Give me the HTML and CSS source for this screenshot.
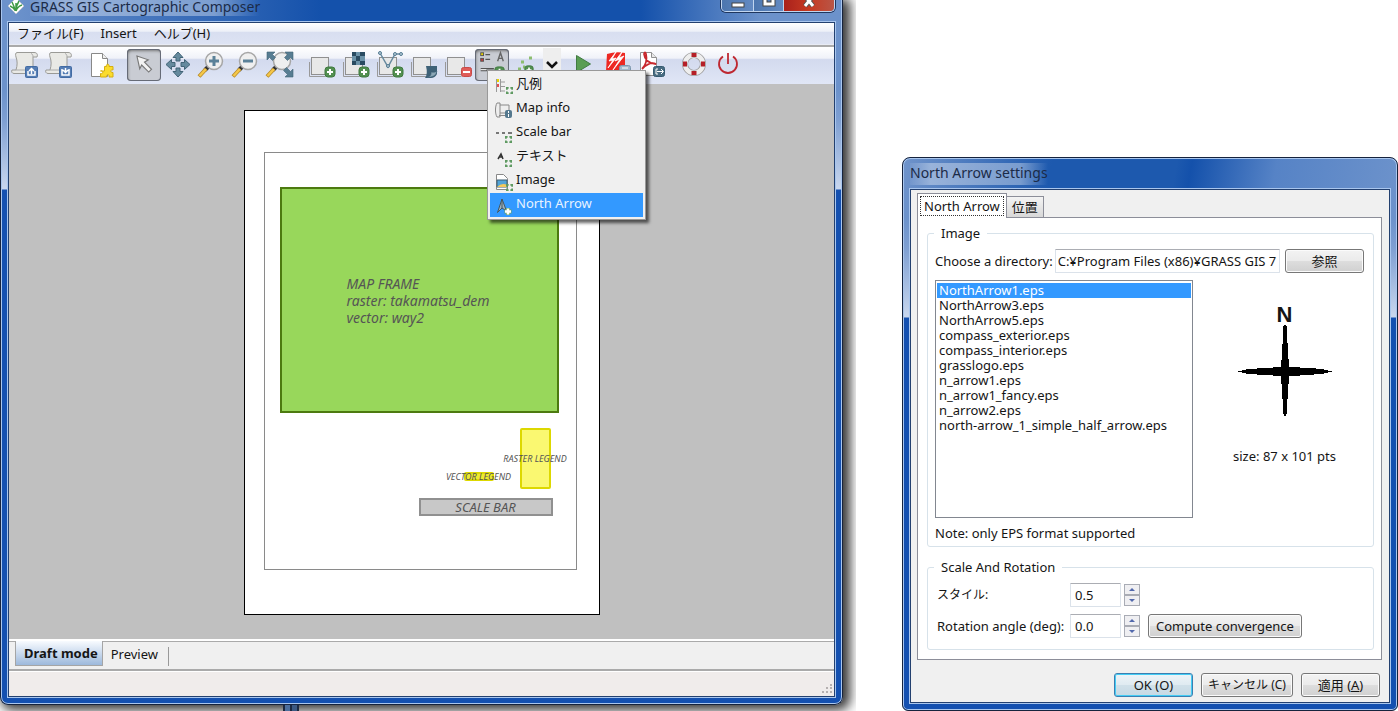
FILE: index.html
```html
<!DOCTYPE html>
<html lang="ja">
<head>
<meta charset="utf-8">
<title>GRASS GIS Cartographic Composer</title>
<link rel="stylesheet" href="styles.css">
</head>
<body>
<svg class="defs" aria-hidden="true">
  <defs>
    <symbol id="plus" viewBox="0 0 12 12"><rect x="1" y="1" width="10" height="10" rx="3" fill="#528f50" stroke="#3f7a3f"/><path d="M6 3v6M3 6h6" stroke="#fff" stroke-width="2"/></symbol>
    <symbol id="frame" viewBox="0 0 34 34"><path d="M4.500 14v14.500h16" fill="none" stroke="#999"/><rect x="6.500" y="9.500" width="17" height="17" fill="#e8e8e8" stroke="#909090"/></symbol>
    <symbol id="scroll" viewBox="0 0 34 34"><path d="M8 4.500h17c3 0 4 2 3 4.500h-4v12c0 3-1 4.500-4 4.500H5c-2 0-3-2-2-3.500h4c1.500-5 1.500-9 0-13-.5-2-1-4 1-4.500z" fill="#e9e9e5" stroke="#9a9a96"/><path d="M24 9c0-2-.5-3-2-3.500M7 22h10c2 0 2 3 4 3" fill="none" stroke="#aaa"/></symbol>
    <symbol id="dots" viewBox="0 0 8 8"><path d="M0 1h3M5 1h3M0 7h3M5 7h3M1 2v1M7 2v1M1 5v1M7 5v1" stroke="#5d9960" stroke-width="2"/></symbol>
    <symbol id="lens" viewBox="0 0 34 34"><path d="M13 19L10 22" stroke="#333" stroke-width="4"/><path d="M11 21L4 28.500" stroke="#b58a28" stroke-width="4"/><path d="M11 21L4.500 28" stroke="#f5c748" stroke-width="2.500"/><circle cx="19" cy="13" r="8.500" fill="#efefef" stroke="#a6a6a6" stroke-width="1.500"/></symbol>
  </defs>
</svg>
<main class="desktop">
  <section class="stage">
    <span class="strip"></span>
    <div class="window composer">
      <header class="titlebar">
        <svg width="16" height="16" viewBox="0 0 16 16"><path d="M8-2l8 8-8 8-8-8z" fill="#fff" stroke="#bbb" stroke-width=".5"/><path d="M7.500 11C6 8 5 7 2 6M7.500 11C6 6 5 4 4 2M8 11c0-4 1-7 3-10M8 11c1-3 3-5 6-6M8 11V3" stroke="#3f9a45" stroke-width="1.500" fill="none"/></svg>
        <h1>GRASS GIS Cartographic Composer</h1>
        <div class="winbuttons">
          <button class="min" aria-label="Minimize"><svg width="14" height="12"><rect x="1" y="3" width="12" height="4" fill="#fff" stroke="#444"/></svg></button>
          <button class="max" aria-label="Maximize"><svg width="14" height="12"><path d="M3-3h8v7H3z" fill="none" stroke="#444" stroke-width="5"/><path d="M3-3h8v7H3z" fill="none" stroke="#fff" stroke-width="3"/></svg></button>
          <button class="close" aria-label="Close"><svg width="14" height="12"><path d="M3-4l8 10M11-4L3 6" stroke="#555" stroke-width="5"/><path d="M3-4l8 10M11-4L3 6" stroke="#fff" stroke-width="3"/></svg></button>
        </div>
      </header>
      <div class="client">
        <nav class="menubar"><button>ファイル(F)</button><button>Insert</button><button>ヘルプ(H)</button></nav>
        <div class="toolbar">
          <button aria-label="Load"><svg viewBox="0 0 34 34"><use href="#scroll"/><rect x="16.500" y="18.500" width="12" height="11" rx="1" fill="#557db4" stroke="#426ba3"/><path d="M19 23v4h7v-4M22.500 26v-5M20 23l2.500-2.500L25 23" stroke="#fff" stroke-width="1.500" fill="none"/></svg></button>
          <button aria-label="Save"><svg viewBox="0 0 34 34"><use href="#scroll"/><rect x="16.500" y="18.500" width="12" height="11" rx="1" fill="#557db4" stroke="#426ba3"/><path d="M19 21v6h7v-6M22.500 20v4M20 22l2.500 2.500L25 22" stroke="#fff" stroke-width="1.500" fill="none"/></svg></button>
          <i class="sep"></i>
          <button aria-label="Page setup"><svg viewBox="0 0 34 34"><path d="M6.500 5.500h11l5 5v18h-16z" fill="#fff" stroke="#888"/><path d="M17.500 5.500v5h5" fill="#eee" stroke="#888"/><path d="M19.500 18.500h2c-1-3 3.500-3 2.500 0h4v3.500c-3-1-3 3 0 2.500v4.500h-4c1-3-3-3-2.500 0h-6v-3.500c3 1 3-3.500 0-2.500h4z" fill="#fbdc2d" stroke="#d5ae10"/></svg></button>
          <i class="sep"></i>
          <button class="pressed" aria-label="Pointer"><svg viewBox="0 0 34 34"><path d="M9.500 7.500l12 4-4 2.500 7.500 7.500-3 3-7.500-7.500-2 4z" fill="#f3f3f3" stroke="#777" stroke-width="1.200"/></svg></button>
          <button aria-label="Pan"><svg viewBox="0 0 34 34"><path d="M17 4l5 5.500h-3v3.500h-4V9.500h-3zM17 29l5-5.500h-3V20h-4v3.500h-3zM5 16.500l5.500-5v3H14v4h-3.500v3zM29 16.500l-5.500-5v3H20v4h3.500v3z" fill="#658a9e" stroke="#426477"/></svg></button>
          <button aria-label="Zoom in"><svg viewBox="0 0 34 34"><use href="#lens"/><path d="M19 8v10M14 13h10" stroke="#5b8198" stroke-width="3"/></svg></button>
          <button aria-label="Zoom out"><svg viewBox="0 0 34 34"><use href="#lens"/><path d="M14 13h10" stroke="#5b8198" stroke-width="3"/></svg></button>
          <button aria-label="Zoom all"><svg viewBox="0 0 34 34"><use href="#lens"/><path d="M4 4h8L9.500 6.500l3 3-3 3-3-3L4 12zM30 4h-8l2.500 2.500-3 3 3 3 3-3L30 12zM30 29h-8l2.500-2.500-4-4 3-3 4 4L30 21z" fill="#577d92" stroke="#426477" stroke-width=".6"/></svg></button>
          <i class="sep"></i>
          <button aria-label="Map frame"><svg viewBox="0 0 34 34"><use href="#frame"/><use href="#plus" x="19" y="18" width="12" height="12"/></svg></button>
          <button aria-label="Raster map"><svg viewBox="0 0 34 34"><use href="#frame"/><path d="M13 4h13v13H13z" fill="#6c93a9"/><path d="M13 4h4v4h-4zM21 4h5v4h-5zM17 8h4v5h-4zM13 13h4v4h-4zM21 13h5v4h-5z" fill="#294b61"/><use href="#plus" x="19" y="18" width="12" height="12"/></svg></button>
          <button aria-label="Vector map"><svg viewBox="0 0 34 34"><use href="#frame"/><path d="M7 5l8 14 7-13h6" fill="none" stroke="#66899e" stroke-width="1.500"/><g fill="#b6cbd7" stroke="#537a91"><circle cx="7" cy="5" r="1.500"/><circle cx="15" cy="18" r="1.500"/><circle cx="22" cy="6" r="1.500"/><circle cx="28" cy="6" r="1.500"/></g><use href="#plus" x="19" y="18" width="12" height="12"/></svg></button>
          <button aria-label="Labels"><svg viewBox="0 0 34 34"><use href="#frame"/><path d="M19 18h11v8q-2 4-6 4h-6q3-4 1-12z" fill="#3e6177"/><path d="M19 29q6 0 5-5 4 1 6-1-1 7-11 6z" fill="#8ba7b6" stroke="#375a70" stroke-width=".5"/></svg></button>
          <button aria-label="Delete"><svg viewBox="0 0 34 34"><use href="#frame"/><rect x="20.500" y="19.500" width="10" height="9" rx="2" fill="#df5c59" stroke="#c84a48"/><path d="M22 24h7" stroke="#fff" stroke-width="2"/></svg></button>
          <button class="pressed" aria-label="Add overlays"><svg viewBox="0 0 34 34"><rect x="5" y="4" width="3" height="3" fill="#e9d300" stroke="#555"/><rect x="5" y="10" width="3" height="3" fill="#c53a3a" stroke="#555"/><path d="M10 6h5M10 11h5M5 21h14M5 23h14" stroke="#555" stroke-width="1.500"/><path d="M5 22h6" stroke="#fff"/><path d="M23 13l3-9 3 9M24 10h4" stroke="#666" stroke-width="1.500" fill="none"/><use href="#plus" x="19" y="18" width="12" height="12"/></svg></button>
          <button aria-label="Add shapes"><svg viewBox="0 0 34 34"><path d="M12 14h3M20 10h3M9 21h3M14 19h2" stroke="#8cbd6f" stroke-width="3"/><use href="#plus" x="15" y="17" width="10" height="10"/></svg></button>
          <button class="drop" aria-label="More shapes"><svg viewBox="0 0 18 34"><path d="M4 14l5 5 5-5" fill="none" stroke="#111" stroke-width="2.500"/></svg></button>
          <button aria-label="Run"><svg viewBox="0 0 34 34"><path d="M9.500 7.500l14 8.500-14 8.500z" fill="#599d53" stroke="#407b42"/></svg></button>
          <button aria-label="PostScript"><svg viewBox="0 0 34 34"><path d="M6 6q9-3 18-1v18H5z" fill="#ed2823"/><path d="M15 4l-7 9 4-1-5 8 8-10-4 1zM21 4l-7 9 5-2-7 11 11-14-5 2z" fill="#fff" stroke="#fff" stroke-width=".8"/><rect x="18.500" y="17.500" width="11" height="11" rx="2" fill="#a4b8cd" stroke="#7d98ae"/><path d="M21 20h6M21 23h6" stroke="#fff"/></svg></button>
          <button aria-label="PDF"><svg viewBox="0 0 34 34"><path d="M5.500 4.500h11l5 5v18h-16z" fill="#fff" stroke="#909090"/><path d="M16.500 4.500v5h5" fill="#e8e8e8" stroke="#909090"/><path d="M7 21q6-6 4-15-1-3-2 0 1 9 12 10-6-3-14 5z" fill="none" stroke="#c8282d" stroke-width="1.800"/><rect x="18.500" y="18.500" width="11" height="10" rx="2" fill="#496c81" stroke="#345a70"/><path d="M23 21h-2v5h2M22 23.500h6M26 21l2.500 2.500L26 26" stroke="#fff" fill="none"/></svg></button>
          <i class="sep"></i>
          <button aria-label="Help"><svg viewBox="0 0 34 34"><circle cx="17" cy="16" r="9" fill="none" stroke="#999" stroke-width="6"/><circle cx="17" cy="16" r="9" fill="none" stroke="#eee" stroke-width="4.500"/><path d="M14.500 7h5M14.500 25h5M8 13.500v5M26 13.500v5" stroke="#b52027" stroke-width="4"/></svg></button>
          <button aria-label="Quit"><svg viewBox="0 0 34 34"><path d="M12 8.500a9 9 0 1 0 10 0M17 5v11" fill="none" stroke="#be2831" stroke-width="1.800"/></svg></button>
          <ul class="menu" role="menu">
            <li role="menuitem"><svg viewBox="0 0 18 20"><path d="M2 2h2v3H2z" fill="#e8d400"/><path d="M2 7h2v3H2z" fill="#e05050"/><path d="M1.500 2v13M5.500 2v13M6 5h4M6 9.500h4M6 14h4" stroke="#999"/><use href="#dots" x="11" y="10" width="7" height="7"/></svg>凡例</li>
            <li role="menuitem"><svg viewBox="0 0 18 20"><path d="M2 2h3v14H2c-2-3-2-11 0-14zM5 4h9v8H5M4 14.500h7" fill="#eee" stroke="#888"/><rect x="10" y="9" width="7" height="8" rx="2" fill="#54788e"/><path d="M13.500 10v2M13.500 13v3" stroke="#fff"/></svg>Map info</li>
            <li role="menuitem"><svg viewBox="0 0 18 20"><path d="M1 8h3M7 8h3M13 8h4" stroke="#777" stroke-width="2"/><use href="#dots" x="10" y="11" width="7" height="7"/></svg>Scale bar</li>
            <li role="menuitem"><svg viewBox="0 0 18 20"><path d="M3 10l3-5 2 5M4 8h4" stroke="#333" stroke-width="1.500" fill="none"/><use href="#dots" x="10" y="11" width="7" height="7"/></svg>テキスト</li>
            <li role="menuitem"><svg viewBox="0 0 18 20"><path d="M1.500 1.500h7l4 4v11h-11z" fill="#fff" stroke="#888"/><path d="M2 7h10v7H2z" fill="#52a4d8" stroke="#3d5d70"/><path d="M2 14q5-5 10-2v2z" fill="#f2c85c"/><use href="#dots" x="11" y="11" width="7" height="7"/></svg>Image</li>
            <li role="menuitem" class="selected"><svg viewBox="0 0 18 20"><path d="M2.500 15.500L7 2l4.500 12L7 11z" fill="#9bb2c0" stroke="#44565f"/><path d="M7 2v9" stroke="#44565f"/><path d="M13 11v7M9.500 14.500h7" stroke="#6ca568" stroke-width="4"/><path d="M13 11.500v6M10 14.500h6" stroke="#fff" stroke-width="2.500"/></svg>North Arrow</li>
          </ul>
        </div>
        <div class="canvas">
          <div class="page">
            <div class="margins"></div>
            <div class="item map"><p>MAP FRAME<br>raster: takamatsu_dem<br>vector: way2</p></div>
            <div class="item raster"><span>RASTER LEGEND</span></div>
            <div class="item vector"><span>VECTOR LEGEND</span></div>
            <div class="item scalebar">SCALE BAR</div>
          </div>
        </div>
        <div class="modes"><button class="active">Draft mode</button><button>Preview</button></div>
        <footer class="status"><svg width="10" height="10"><path d="M8 1h2M8 4h2M8 8h2M4 4h2M4 8h2M0 8h2" stroke="#b5b0b0" stroke-width="2"/></svg></footer>
      </div>
    </div>
  </section>

  <section class="window dialog" role="dialog" aria-labelledby="dialog-title">
    <header class="titlebar"><h2 id="dialog-title">North Arrow settings</h2></header>
    <div class="client">
      <div class="tabs" role="tablist"><button role="tab" class="active"><span>North Arrow</span></button><button role="tab">位置</button></div>
      <form class="panel">
        <fieldset class="image">
          <legend>Image</legend>
          <div class="row"><label for="dir">Choose a directory:</label><input id="dir" type="text" value="C:¥Program Files (x86)¥GRASS GIS 7"><button type="button" class="btn">参照</button></div>
          <div class="choose">
            <ul class="files" role="listbox" aria-label="Image">
              <li class="selected" role="option">NorthArrow1.eps</li><li role="option">NorthArrow3.eps</li><li role="option">NorthArrow5.eps</li><li role="option">compass_exterior.eps</li><li role="option">compass_interior.eps</li><li role="option">grasslogo.eps</li><li role="option">n_arrow1.eps</li><li role="option">n_arrow1_fancy.eps</li><li role="option">n_arrow2.eps</li><li role="option">north-arrow_1_simple_half_arrow.eps</li>
            </ul>
            <div class="preview">
              <strong>N</strong>
              <svg width="94" height="92" viewBox="0 0 94 92" shape-rendering="crispEdges"><path d="M46 0h2l1 2v16l1 1v15l1 1v7h11v1h16v1h8v1l8 1v1l-8 1-1 1H76v1H62v1H51v8h-1v15h-1v15h-1l-1 4-1-4h-1V74h-1V59h-1v-8H35v-1H19v-1H8v-1l-8-1v-1l8-1v-1h11v-1h16v-1h8v-7l1-1V19l1-1V2z"/></svg>
              <span>size: 87 x 101 pts</span>
            </div>
          </div>
          <p>Note: only EPS format supported</p>
        </fieldset>
        <fieldset class="scale">
          <legend>Scale And Rotation</legend>
          <div class="grid">
            <label for="scale" class="kana">スタイル:</label>
            <div class="spin"><input id="scale" type="text" value="0.5"><span class="arrows"><button type="button" class="up" aria-label="Increase scale"></button><button type="button" class="down" aria-label="Decrease scale"></button></span></div>
            <label for="angle">Rotation angle (deg):</label>
            <div class="spin"><input id="angle" type="text" value="0.0"><span class="arrows"><button type="button" class="up" aria-label="Increase angle"></button><button type="button" class="down" aria-label="Decrease angle"></button></span><button type="button" class="btn">Compute convergence</button></div>
          </div>
        </fieldset>
      </form>
      <footer class="actions"><button class="btn default">OK (O)</button><button class="btn cancel">キャンセル (C)</button><button class="btn">適用 (<u>A</u>)</button></footer>
    </div>
  </section>
</main>
</body>
</html>
```
FILE: styles.css
```css
* { box-sizing: border-box; }
body { margin: 0; background: #fff; color: #151515; font: 13px/16px "Noto Sans", "Noto Sans CJK JP", sans-serif; }
button, input { font: inherit; color: inherit; margin: 0; }
button { padding: 0; border: 0; background: none; }
ul { list-style: none; margin: 0; padding: 0; }
h1, h2, p { margin: 0; font-size: inherit; font-weight: normal; }
.defs { position: absolute; width: 0; height: 0; }

.desktop { display: grid; grid-template-columns: 856fr 496fr; column-gap: 46px; min-height: 100vh; }
.stage { position: relative; display: flex; overflow: hidden; padding: 0 13px 6px 0; }
.strip { position: absolute; left: 283px; bottom: 0; width: 16px; height: 6px; border: solid #1d2a42; border-width: 0 2px; background: linear-gradient(90deg, #4c6e9d 5px, #1d2a42 5px 7px, #3c5983 7px); z-index: 1; }

/* glass window frame */
.window { display: flex; flex-direction: column; flex: 1; min-width: 0; padding: 0 7px 7px; border: 1px solid #16233d; }
.composer { border-top: 0; border-radius: 0 0 8px 8px; background: linear-gradient(90deg, transparent 12px, #1451ab 320px 640px, transparent 760px) top / 100% 22px no-repeat, linear-gradient(#6c92cb 0 90px, #7e9fd2 120px, #c9d7ee 189px, #1450b0 190px); box-shadow: inset 0 -1px #a9c6ee, inset 1px 0 #a9c6ee, inset -1px 0 #a9c6ee, 4px 2px 12px 3px #000c; }
.dialog { margin-top: 157px; border-radius: 8px 8px 6px 6px; background: linear-gradient(100deg, #7094cb, #1d59ae 30% 55%, #1451ab 58%, #5683c6 75%, #6c92cb) top / 100% 32px no-repeat, linear-gradient(#6c92cb 0 60px, #7e9fd2 90px, #c9d7ee 159px, #1450b0 160px); box-shadow: inset 0 0 0 1px #a9c6ee; }
.titlebar { display: flex; color: #1b2b48; }
.titlebar h1, .titlebar h2 { font-size: 14px; background: linear-gradient(90deg, #ffffff10, #ffffff5c 15% 80%, transparent); }
.composer .titlebar { height: 22px; gap: 6px; }
.composer h1 { height: 16px; line-height: 14px; }
.winbuttons { display: flex; margin-left: auto; height: 12px; border: 1px solid #c1d5ef; border-top: 0; border-radius: 0 0 5px 5px; overflow: hidden; box-shadow: 0 0 0 1px #1f365e; }
.winbuttons button { display: flex; justify-content: center; background: linear-gradient(90deg, #4c76af, #638ac2); border-right: 1px solid #c1d5ef; }
.min { width: 32px; } .max { width: 30px; }
.winbuttons .close { width: 50px; border: 0; background: linear-gradient(90deg, #a9211c, #c63a22, #b95647); }
.client { display: flex; flex-direction: column; flex: 1; border: 1px solid #23406f; box-shadow: 0 0 0 1px #a9c6ee; background: #f0f0f0; }

.menubar { display: flex; gap: 17px; height: 22px; padding: 0 8px 2px; background: linear-gradient(#fff, #edf0f8 40%, #d8def0 42%, #dde3f3); border-bottom: 1px solid #e8ebf4; }
.toolbar { position: relative; display: flex; align-items: center; height: 39px; padding: 1px 0 2px; border-top: 2px solid #aaa; background: linear-gradient(#fff, #f0f2f9 30%, #d3daee 34%, #e0e6f6); }
.toolbar button { flex: 0 0 34px; height: 34px; }
.toolbar button svg { display: block; width: 100%; height: 34px; }
.toolbar .pressed { height: 32px; border-radius: 4px; background: #c9ccd3; box-shadow: inset 0 0 0 1px #666b77, inset 1px 2px 3px #777; }
.toolbar .pressed svg { height: 32px; }
.toolbar .drop { flex-basis: 18px; margin-right: 6px; background: #eee; }
.sep { flex: 0 0 8px; }
.menu { position: absolute; left: 478px; top: 23px; width: 159px; padding: 2px; border: 1px solid #999; background: #f0f0f0; box-shadow: 3px 3px 3px #0009; z-index: 2; }
.menu li { display: flex; align-items: center; height: 24px; gap: 3px; padding: 0 0 4px 5px; }
.menu svg { width: 18px; height: 20px; margin-top: 8px; }
.menu .selected { background: #3399ff; color: #e8f3ff; }

.canvas { flex: 1; display: flex; align-items: flex-start; justify-content: center; padding: 26px 0 18px; background: #c0c0c0; }
.page { position: relative; width: 356px; height: 505px; border: 1px solid #000; background: #fff; }
.page > * { position: absolute; }
.margins { left: 19px; top: 41px; width: 313px; height: 418px; border: 1px solid #8a8a8a; }
.item { display: flex; justify-content: center; align-items: center; font-style: italic; color: #555; }
.map { left: 35px; top: 76px; width: 279px; height: 226px; border: 2px solid #4c7a0f; background: #98d75b; justify-content: flex-start; padding-left: 65px; font-size: 14px; line-height: 17px; }
.raster { left: 275px; top: 317px; width: 31px; height: 61px; border: 2px solid #ddd800; border-radius: 2px; background: #faf871; }
.vector { left: 219px; top: 361px; width: 30px; height: 9px; border: 2px solid #ddd800; border-radius: 2px; background: #eeea30; }
.raster span, .vector span { flex: none; font-size: 9px; }
.scalebar { left: 174px; top: 387px; width: 134px; height: 18px; border: 2px solid #909090; background: #c8c8c8; font-size: 13px; }

.modes { display: flex; align-items: flex-start; height: 32px; padding-left: 6px; border-top: 2px solid #fff; border-bottom: 2px solid #aaa; box-shadow: inset 0 1px #aaa; }
.modes button { height: 25px; padding: 0 11px 0 8px; background: linear-gradient(#999, #999) right bottom / 1px 19px no-repeat; }
.modes .active { padding: 0 4px 0 8px; font-weight: bold; background: linear-gradient(#f8fbff, #9db9dc); border: 1px solid #a5a5a5; border-top: 0; }
.status { display: flex; align-items: flex-end; justify-content: flex-end; height: 25px; padding: 2px; background: #f0eceb; border-top: 1px solid #fff; }

.dialog .titlebar { height: 31px; align-items: center; }
.dialog .titlebar h2 { padding: 2px 0 4px; }
.dialog .client { padding: 4px 7px 5px 6px; }
.tabs { display: flex; align-items: flex-end; height: 23px; }
.tabs button { height: 21px; padding: 0 5px; border: 1px solid #8c8e99; border-left: 0; border-bottom: 0; background: linear-gradient(#f4f4f4, #d8d8d8); }
.tabs .active { height: 25px; margin-bottom: -1px; padding: 2px; border-left: 1px solid #8c8e99; background: #fff; z-index: 1; }
.tabs .active span { display: block; padding: 1px 3px; border: 1px dotted #333; }
.panel { display: flex; flex-direction: column; flex: 1; padding: 7px 7px 9px 9px; border: 1px solid #8c8e99; background: #fff; }
fieldset { min-width: 0; margin: 0; padding: 0 9px 0 7px; border: 1px solid #d7e2ea; border-radius: 3px; }
legend { margin-left: -1px; padding: 0 7px; }
.image { height: 322px; margin-bottom: 12px; }
.row { display: flex; align-items: center; margin-top: 8px; }
.row label { flex: none; margin-right: 2px; }
input { height: 24px; min-width: 0; padding: 0 4px; border: 1px solid #dbe2ea; border-top-color: #abadb3; border-radius: 1px; background: #fff; }
.row input { flex: 1; margin-right: 5px; padding: 0 2px; }
.btn { height: 24px; border: 1px solid #777; border-radius: 3px; background: linear-gradient(#f3f3f3, #ebebeb 48%, #dddddd 52%, #d0d0d0); box-shadow: inset 0 0 0 1px #fbfbfb; }
.row .btn { width: 79px; }
.choose { display: flex; margin-top: 7px; height: 238px; }
.files { width: 258px; padding: 2px 1px; border: 1px solid #828790; line-height: 15px; }
.files li { padding-left: 2px; white-space: nowrap; }
.files .selected { background: #3399ff; color: #fff; }
.preview { flex: 1; display: flex; flex-direction: column; align-items: center; padding: 25px 0 0 12px; }
.preview strong { font: bold 22px/20px "Liberation Sans", sans-serif; }
.preview span { margin-top: 31px; }
.image p { margin-top: 7px; }
.scale { flex: 1; padding-left: 9px; }
.scale legend { margin-left: -3px; }
.grid { display: grid; grid-template-columns: 133px 1fr; row-gap: 7px; align-items: center; margin-top: 8px; }
.kana { font-size: 12px; }
.spin { display: flex; }
.spin input { width: 51px; }
.arrows { display: flex; flex-direction: column; width: 16px; margin: 1px 8px 1px 3px; }
.arrows button { height: 11px; display: flex; align-items: center; justify-content: center; border: 1px solid #a9acb5; background: #efeff2; }
.arrows button::after { content: ""; border: 3px solid transparent; }
.arrows .up::after { margin-top: -3px; border-bottom-color: #5269ac; }
.arrows .down::after { margin-top: 3px; border-top-color: #5269ac; }
.spin .btn { padding: 0 7px; }
.actions { display: flex; justify-content: flex-end; gap: 8px; margin-top: 13px; padding-right: 2px; }
.actions .btn { width: 79px; }
.actions .cancel { width: 92px; font-size: 12px; }
.actions .default { border-color: #3c7fb1; background: linear-gradient(#eef4f8, #e0ebf1 48%, #d0e0e9 52%, #c6d9e4); box-shadow: inset 0 0 0 1px #44cdf5; }
```
